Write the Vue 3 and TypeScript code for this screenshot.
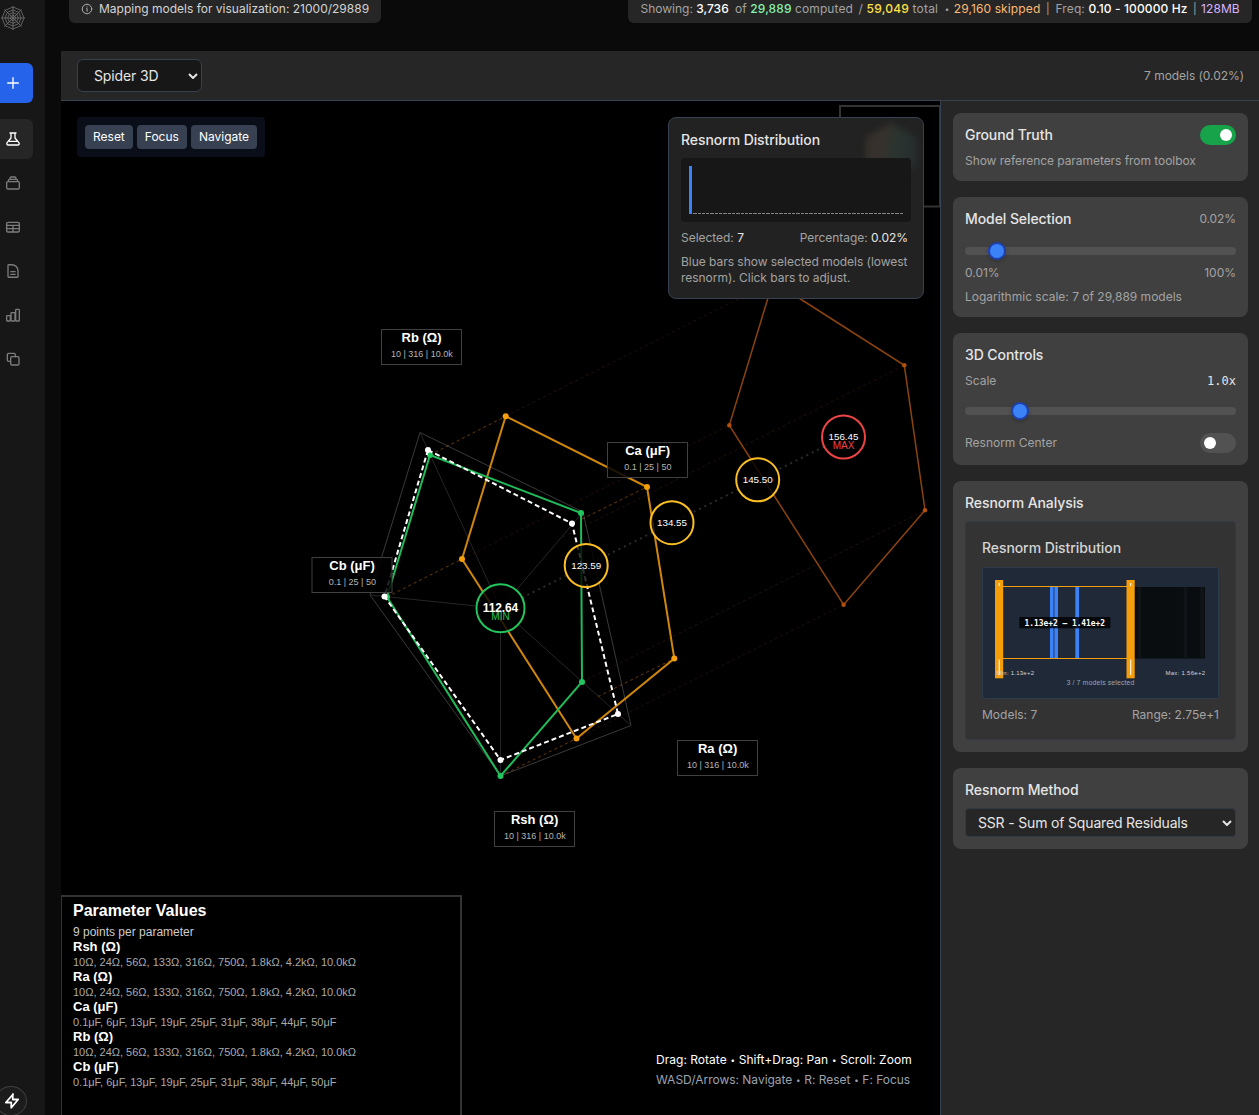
<script setup lang="ts">
import { ref } from 'vue'

type Point = [number, number]

interface AxisLabel { name: string; marks: string; x: number; y: number }
interface LevelMark { x: number; y: number; r: number; value: string; note: string; color: string }
interface ParameterRow { name: string; values: string; width: number }

const groundTruth = ref(true)
const resnormCenter = ref(false)

const center: Point = [500.5, 608.5]
const frame: Point[] = [[420, 432.5], [583, 512], [631, 725.5], [500.5, 776], [370, 595]]
const green: Point[] = [[430, 455], [581, 513], [582, 682], [500.5, 776], [387, 597]]
const truth: Point[] = [[428, 450], [572, 523.5], [618, 714], [500.5, 760], [384.5, 596.5]]
const orange: Point[] = [[505.7, 416.2], [647, 487], [674.3, 658.5], [576.5, 738.5], [462, 559]]
const brown: Point[] = [[773, 281.5], [904.3, 365.3], [925, 510.2], [843.6, 604.7], [729.3, 425.3]]
const nearLinks: Point[] = [[430, 455], [582, 519], [598, 696.5], [500.5, 776], [387, 597]]
const farLinks: Point[] = [[505.7, 416.2], [563, 537], [582, 682], [576.5, 738.5], [462, 559]]

const toPoints = (list: Point[]): string => list.map((p) => p.join(',')).join(' ')

const axisLabels: AxisLabel[] = [
  { name: 'Rb (Ω)', marks: '10 | 316 | 10.0k', x: 381.5, y: 329.5 },
  { name: 'Ca (μF)', marks: '0.1 | 25 | 50', x: 607.5, y: 442.5 },
  { name: 'Cb (μF)', marks: '0.1 | 25 | 50', x: 312, y: 557.5 },
  { name: 'Ra (Ω)', marks: '10 | 316 | 10.0k', x: 677.5, y: 740.5 },
  { name: 'Rsh (Ω)', marks: '10 | 316 | 10.0k', x: 494.5, y: 811.5 },
]

const levels: LevelMark[] = [
  { x: 843.5, y: 437, r: 21.5, value: '156.45', note: 'MAX', color: '#ef4444' },
  { x: 757.7, y: 479.8, r: 21.5, value: '145.50', note: '', color: '#fbbf24' },
  { x: 672, y: 522.7, r: 21.5, value: '134.55', note: '', color: '#fbbf24' },
  { x: 586.2, y: 565.5, r: 21.5, value: '123.59', note: '', color: '#fbbf24' },
  { x: 500.5, y: 608.3, r: 24, value: '112.64', note: 'MIN', color: '#22c55e' },
]

const ohms = '10Ω, 24Ω, 56Ω, 133Ω, 316Ω, 750Ω, 1.8kΩ, 4.2kΩ, 10.0kΩ'
const farads = '0.1μF, 6μF, 13μF, 19μF, 25μF, 31μF, 38μF, 44μF, 50μF'
const parameters: ParameterRow[] = [
  { name: 'Rsh (Ω)', values: ohms, width: 283 },
  { name: 'Ra (Ω)', values: ohms, width: 283 },
  { name: 'Ca (μF)', values: farads, width: 263.5 },
  { name: 'Rb (Ω)', values: ohms, width: 283 },
  { name: 'Cb (μF)', values: farads, width: 263.5 },
]

const webRing = (r: number): string =>
  Array.from({ length: 8 }, (_, i) => {
    const a = (i * Math.PI) / 4
    return `${(12 + r * Math.sin(a)).toFixed(2)},${(12 - r * Math.cos(a)).toFixed(2)}`
  }).join(' ')
</script>

<template>
  <div class="app">
    <aside class="sidebar">
      <svg class="logo" viewBox="0 0 24 24" fill="none" stroke="#737373" stroke-width="0.8">
        <polygon v-for="r in [11, 8, 5.3, 2.6]" :key="r" :points="webRing(r)" />
        <path d="M12 0v24M0 12h24M3.5 3.5l17 17M20.500 3.500l-17 17" />
      </svg>
      <button class="nav new">
        <svg viewBox="0 0 24 24"><path d="M12 4v16M4 12h16" /></svg>
      </button>
      <button class="nav active">
        <svg viewBox="0 0 24 24"><path d="M7.500 3h9M9 3v7.500L3.200 17.500C2 19.500 3 21 5 21h14c2 0 3-1.500 1.800-3.500L15 10.500V3M6.500 15.500h11" /></svg>
      </button>
      <button class="nav">
        <svg viewBox="0 0 24 24"><path d="M4.500 10h15a2 2 0 0 1 2 2v7a2 2 0 0 1-2 2h-15a2 2 0 0 1-2-2v-7a2 2 0 0 1 2-2ZM5 10V8.500a2 2 0 0 1 2-2h10a2 2 0 0 1 2 2V10M7.500 6.500V5a2 2 0 0 1 2-2h5a2 2 0 0 1 2 2v1.500" /></svg>
      </button>
      <button class="nav">
        <svg viewBox="0 0 24 24"><rect x="2.500" y="5" width="19" height="14.500" rx="2" /><path d="M2.500 9.500h19M2.500 14.500h19M12 9.500v10" /></svg>
      </button>
      <button class="nav">
        <svg viewBox="0 0 24 24"><path d="M19.500 14.250v-2.600a9 9 0 0 0-9-9H5.600c-.6 0-1.100.5-1.100 1.100v16.500c0 .6.500 1.100 1.100 1.100h12.800c.6 0 1.100-.5 1.100-1.100ZM8.800 13h6.400M8.800 17h6.400" /></svg>
      </button>
      <button class="nav">
        <svg viewBox="0 0 24 24"><rect x="2.500" y="13" width="5.500" height="8" rx="1" /><rect x="9" y="8.500" width="6" height="12.500" rx="1" /><rect x="16" y="3.500" width="5.500" height="17.500" rx="1" /></svg>
      </button>
      <button class="nav">
        <svg viewBox="0 0 24 24"><rect x="8.500" y="8.500" width="12.500" height="12.500" rx="2" /><path d="M15.500 8.500V5.500a2 2 0 0 0-2-2h-8a2 2 0 0 0-2 2v8a2 2 0 0 0 2 2h3" /></svg>
      </button>
      <div class="bolt">
        <svg viewBox="0 0 24 24"><path d="M13.500 3 3.800 14H11v7l9.200-11H13V3Z" /></svg>
      </div>
    </aside>

    <main class="main">
      <header class="statusbar">
        <div class="chip mapping">
          <svg viewBox="0 0 24 24"><circle cx="12" cy="12" r="9.500" /><path d="M11.300 11.300h.9v5.200M12 7.600v.4" /></svg>
          <span>Mapping models for visualization: 21000/29889</span>
        </div>
        <div class="chip stats">
          <span class="s0">Showing: <b>3,736</b></span>
          <span class="s1">of <b class="c-green">29,889</b> computed</span>
          <span class="s2">/ <b class="c-yellow">59,049</b> total</span>
          <span class="s3"><u>•</u><i class="c-orange">29,160 skipped</i></span>
          <span class="s4">|</span>
          <span class="s5">Freq: <b>0.10 - 100000 Hz</b></span>
          <span class="s6">|</span>
          <span class="c-purple">128MB</span>
        </div>
      </header>

      <section class="toolbar">
        <div class="select view-select">
          <span>Spider 3D</span>
          <svg viewBox="0 0 10 6"><path d="M1 1l4 4 4-4" /></svg>
        </div>
        <span class="count">7 models (0.02%)</span>
      </section>

      <div class="workspace">
        <section class="stage">
          <svg class="plot" viewBox="61 101 879 1014">
            <rect x="840" y="106" width="100" height="100.500" fill="none" stroke="#333" stroke-width="2" />

            <g stroke="#262626" fill="none">
              <polygon :points="toPoints(frame)" stroke="#3a3a3a" />
              <line v-for="(p, i) in frame" :key="i" :x1="center[0]" :y1="center[1]" :x2="p[0]" :y2="p[1]" />
            </g>

            <g fill="none" stroke-dasharray="3 3">
              <line v-for="(p, i) in farLinks" :key="'f' + i" :x1="p[0]" :y1="p[1]" :x2="brown[i][0]" :y2="brown[i][1]" stroke="#b4500d" stroke-opacity="0.2" />
              <line v-for="(p, i) in nearLinks" :key="'n' + i" :x1="p[0]" :y1="p[1]" :x2="orange[i][0]" :y2="orange[i][1]" stroke="#f58b0b" stroke-opacity="0.42" />
            </g>

            <polygon :points="toPoints(brown)" fill="none" stroke="#8a430d" stroke-width="1.500" />
            <circle v-for="(p, i) in brown" :key="'b' + i" :cx="p[0]" :cy="p[1]" r="2.200" fill="#b4500d" />
            <polygon :points="toPoints(orange)" fill="none" stroke="#cf860c" stroke-width="2" />
            <circle v-for="(p, i) in orange" :key="'o' + i" :cx="p[0]" :cy="p[1]" r="3" fill="#f59e0b" />
            <polygon :points="toPoints(green)" fill="none" stroke="#20bb59" stroke-width="2" />
            <circle v-for="(p, i) in green" :key="'g' + i" :cx="p[0]" :cy="p[1]" r="3" fill="#22c55e" />
            <polygon :points="toPoints(truth)" fill="none" stroke="#fff" stroke-width="2" stroke-dasharray="5 3" />
            <circle v-for="(p, i) in truth" :key="'t' + i" :cx="p[0]" :cy="p[1]" r="3" fill="#fff" />

            <line :x1="center[0]" :y1="center[1]" x2="843.500" y2="437" stroke="#2b2b2b" stroke-width="2" stroke-dasharray="2 4" />

            <g v-for="l in axisLabels" :key="l.name" :transform="`translate(${l.x} ${l.y})`" text-anchor="middle">
              <rect width="80" height="35" fill="#000" fill-opacity="0.85" stroke="#404040" />
              <text x="40.100" y="12.700" font-size="13" font-weight="700" fill="#fff">{{ l.name }}</text>
              <text x="40.300" y="27.500" font-size="9" fill="#b5b5b5">{{ l.marks }}</text>
            </g>

            <g v-for="m in levels" :key="m.value" text-anchor="middle">
              <circle :cx="m.x" :cy="m.y" :r="m.r" fill="#000" fill-opacity="0.8" :stroke="m.color" stroke-width="2" />
              <text v-if="m.r > 22" :x="m.x" :y="m.y + 3.500" font-size="12" font-weight="700" textLength="35.500" fill="#fff">{{ m.value }}</text>
              <text v-else :x="m.x" :y="m.y + 3" font-size="9.500" textLength="30" lengthAdjust="spacingAndGlyphs" fill="#fff">{{ m.value }}</text>
              <text v-if="m.note" :x="m.x" :y="m.y + 12" font-size="10" :fill="m.color">{{ m.note }}</text>
            </g>

            <rect x="61" y="896" width="400" height="230" fill="#000" stroke="#333" stroke-width="2" />
            <text x="73" y="916" font-size="16" font-weight="700" fill="#fff">Parameter Values</text>
            <text x="73" y="936" font-size="12" fill="#ccc">9 points per parameter</text>
            <g v-for="(p, i) in parameters" :key="p.name">
              <text x="73" :y="951.300 + i * 30" font-size="13" font-weight="700" fill="#fff">{{ p.name }}</text>
              <text x="73" :y="966 + i * 30" font-size="11" :textLength="p.width" fill="#aaa">{{ p.values }}</text>
            </g>
          </svg>

          <div class="camera">
            <button>Reset</button>
            <button>Focus</button>
            <button>Navigate</button>
          </div>

          <div class="popover">
            <div class="glow"><span></span></div>
            <h3>Resnorm Distribution</h3>
            <div class="bars"><i v-for="n in 50" :key="n" :class="{ on: n === 1 }"></i></div>
            <div class="split">
              <span>Selected: <em>7</em></span>
              <span>Percentage: <em>0.02%</em></span>
            </div>
            <p>Blue bars show selected models (lowest<br />resnorm). Click bars to adjust.</p>
          </div>

          <div class="hints">
            <div>Drag: Rotate <u>•</u> Shift+Drag: Pan <u>•</u> Scroll: Zoom</div>
            <div class="dim">WASD/Arrows: Navigate <u>•</u> R: Reset <u>•</u> F: Focus</div>
          </div>
        </section>

        <aside class="panel">
          <div class="card truth">
            <div class="row">
              <h3>Ground Truth</h3>
              <button class="switch" :class="{ on: groundTruth }" @click="groundTruth = !groundTruth"></button>
            </div>
            <p>Show reference parameters from toolbox</p>
          </div>

          <div class="card selection">
            <div class="row"><h3>Model Selection</h3><small>0.02%</small></div>
            <div class="slider"><span style="left: 23px"></span></div>
            <div class="row small"><span>0.01%</span><span>100%</span></div>
            <p>Logarithmic scale: 7 of 29,889 models</p>
          </div>

          <div class="card controls">
            <h3>3D Controls</h3>
            <div class="row small"><span>Scale</span><span class="mono">1.0x</span></div>
            <div class="slider"><span style="left: 46px"></span></div>
            <div class="row small center">
              <span>Resnorm Center</span>
              <button class="switch" :class="{ on: resnormCenter }" @click="resnormCenter = !resnormCenter"></button>
            </div>
          </div>

          <div class="card analysis">
            <h3>Resnorm Analysis</h3>
            <div class="inner">
              <h4>Resnorm Distribution</h4>
              <svg class="range" viewBox="982 567 237 132">
                <rect x="982.500" y="567.500" width="236" height="131" rx="2" fill="#1f2937" stroke="#2d3a4c" />
                <rect x="1050" y="587" width="3.500" height="71" fill="#3b82f6" />
                <rect x="1053.500" y="587" width="1.500" height="71" fill="#2f62b4" />
                <rect x="1055" y="587" width="3" height="71" fill="#3b82f6" />
                <rect x="1075.300" y="587" width="3.700" height="71" fill="#3b82f6" />
                <rect x="1134" y="587" width="71" height="71.500" fill="#090d10" />
                <path d="M1139.500 587v71.500M1185.500 587v71.500M1202 587v71.500" stroke="#101317" stroke-width="3.500" />
                <rect x="999" y="586.500" width="131.500" height="72" fill="none" stroke="#f59e0b" />
                <g v-for="x in [995, 1126.500]" :key="x">
                  <rect :x="x" y="580" width="8.200" height="98.300" fill="#f59e0b" />
                  <path :d="`M${x + 4.200} 583v3M${x + 4.200} 659.500v15.500`" stroke="#fff" />
                </g>
                <rect x="1019.300" y="617" width="91" height="11.300" fill="#000" fill-opacity="0.8" />
                <text class="mono" x="1064.800" y="625.500" text-anchor="middle" font-size="8" font-weight="700" textLength="80.500" lengthAdjust="spacingAndGlyphs" fill="#fff">1.13e+2 – 1.41e+2</text>
                <g font-size="6" fill="#d1d5db">
                  <text x="996.500" y="675" textLength="37.500">Min: 1.13e+2</text>
                  <text x="1165.500" y="675" textLength="39.500">Max: 1.56e+2</text>
                  <text x="1066.500" y="685" font-size="7" textLength="68" fill="#9ca3af">3 / 7 models selected</text>
                </g>
              </svg>
              <div class="row small"><span>Models: 7</span><span>Range: 2.75e+1</span></div>
            </div>
          </div>

          <div class="card method">
            <h3>Resnorm Method</h3>
            <div class="select">
              <span>SSR - Sum of Squared Residuals</span>
              <svg viewBox="0 0 10 6"><path d="M1 1l4 4 4-4" /></svg>
            </div>
          </div>
        </aside>
      </div>
    </main>
  </div>
</template>

<style>
body {
  margin: 0;
  background: #0a0a0a;
}
</style>

<style scoped>
* {
  box-sizing: border-box;
}
.app {
  display: flex;
  width: 1259px;
  height: 1115px;
  overflow: hidden;
  background: #0a0a0a;
  color: #e5e5e5;
  font-family: Inter, "Liberation Sans", sans-serif;
  font-size: 12px;
  line-height: 16px;
}
h3, h4, p {
  margin: 0;
}
h3, h4 {
  font-size: 14px;
  line-height: 20px;
  font-weight: 500;
  letter-spacing: -0.08px;
}
button {
  border: 0;
  padding: 0;
  font: inherit;
  color: inherit;
}
b, i, em {
  font-style: normal;
  font-weight: 500;
}
u {
  display: inline-block;
  width: 5.2px;
  font-size: 8px;
  line-height: 8px;
  text-align: center;
  vertical-align: 1px;
  text-decoration: none;
}

.sidebar {
  position: relative;
  width: 45px;
  flex: none;
  background: #171717;
}
.logo {
  display: block;
  width: 24px;
  height: 24px;
  margin: 6px 0 33px 1px;
}
.nav {
  display: block;
  width: 33px;
  height: 40px;
  margin-bottom: 4px;
  padding-left: 5px;
  border-radius: 0 6px 6px 0;
  background: transparent;
  color: #7c7c7c;
}
.nav svg {
  display: block;
  width: 16px;
  height: 16px;
}
.nav svg, .bolt svg, .mapping svg {
  fill: none;
  stroke: currentColor;
  stroke-width: 2;
  stroke-linecap: round;
  stroke-linejoin: round;
}
.nav.new {
  margin-bottom: 16px;
  background: #2563eb;
  color: #fff;
}
.nav.active {
  background: #262626;
  color: #fff;
}
.bolt {
  position: absolute;
  left: -5px;
  top: 1086px;
  width: 32px;
  height: 30px;
  border: 1px solid #404040;
  border-radius: 50%;
  background: #1c1c1c;
  color: #fff;
}
.bolt svg {
  width: 18px;
  height: 18px;
  margin: 5px 0 0 7px;
  stroke-width: 2.4;
}

.main {
  display: flex;
  flex-direction: column;
  flex: 1;
  padding-left: 16px;
  min-width: 0;
}
.statusbar {
  display: flex;
  justify-content: space-between;
  align-items: flex-start;
  height: 51px;
  padding: 0 8px;
}
.chip {
  display: flex;
  align-items: center;
  height: 23px;
  padding-bottom: 5px;
  border-radius: 0 0 6px 6px;
  background: #262626;
}
.mapping {
  width: 312px;
  padding-left: 12px;
  gap: 6px;
  color: #d4d4d4;
}
.mapping svg {
  width: 12px;
  height: 12px;
  color: #b0b0b0;
}
.stats {
  width: 624px;
  margin-right: -1px;
  padding-left: 12.5px;
  color: #a3a3a3;
  white-space: nowrap;
}
.stats span {
  flex: none;
}
.stats b {
  color: #fff;
}
.stats .c-green { color: #86efac; }
.stats .c-yellow { color: #fde047; }
.stats .c-orange { color: #fdba74; font-weight: 400; }
.stats .c-purple { color: #d8b4fe; letter-spacing: 0.1px; }
.s0 { width: 94.5px; }
.s1 { width: 123.5px; letter-spacing: 0.1px; }
.s2 { width: 86px; letter-spacing: 0.2px; }
.s3 { width: 101.5px; letter-spacing: 0.12px; }
.s3 u { margin-right: 4px; }
.s4 { width: 9.5px; font-size: 11px; }
.s5 { width: 137.5px; letter-spacing: 0.12px; }
.s6 { width: 8px; font-size: 11px; }

.toolbar {
  display: flex;
  justify-content: space-between;
  align-items: center;
  height: 50px;
  padding: 0 15px 0 16px;
  border-bottom: 1px solid #374151;
  background: #262626;
}
.count {
  color: #a3a3a3;
  letter-spacing: -0.05px;
}
.select {
  display: flex;
  justify-content: space-between;
  align-items: center;
  border: 1px solid #374151;
  border-radius: 4px;
  color: #e5e5e5;
  font-size: 14px;
  letter-spacing: -0.12px;
}
.select svg {
  width: 10px;
  height: 6px;
  fill: none;
  stroke: currentColor;
  stroke-width: 2;
}
.view-select {
  width: 125px;
  height: 33px;
  padding: 0 3px 0 16px;
  border-radius: 6px;
  background: #171717;
}

.workspace {
  display: flex;
  flex: 1;
}
.stage {
  position: relative;
  width: 879px;
  background: #000;
}
.plot {
  display: block;
  width: 879px;
  height: 1014px;
  font-family: "Liberation Sans", Arial, sans-serif;
}
.camera {
  position: absolute;
  left: 16px;
  top: 16px;
  display: flex;
  gap: 4px;
  padding: 8px;
  border-radius: 4px;
  background: #090e19;
}
.camera button {
  height: 24px;
  padding: 0 8px;
  border-radius: 4px;
  background: #374151;
  color: #fff;
}
.popover {
  position: absolute;
  left: 607px;
  top: 16px;
  width: 256px;
  height: 182px;
  padding: 12px;
  border: 1px solid #374151;
  border-radius: 8px;
  background: #222;
  color: #a3a3a3;
  overflow: hidden;
}
.popover > * {
  position: relative;
}
.popover h3 {
  color: #e5e5e5;
}
.popover p {
  letter-spacing: -0.03px;
}
.popover .glow {
  position: absolute;
  left: 197px;
  top: 5px;
  width: 50px;
  height: 56px;
  filter: blur(3px);
}
.glow span {
  display: block;
  height: 100%;
  background: linear-gradient(100deg, #36312c 38%, #2b3530 52%, #28302f 75%);
  clip-path: polygon(50% 0, 100% 25%, 100% 75%, 50% 100%, 0 75%, 0 25%);
}
.bars {
  display: flex;
  align-items: flex-end;
  gap: 1px;
  height: 64px;
  margin-top: 8px;
  padding: 8px;
  border-radius: 4px;
  background: #171717;
}
.bars i {
  flex: 1;
  height: 1px;
  background: #858585;
}
.bars i.on {
  height: 48px;
  background: #3b82f6;
}
.split {
  display: flex;
  justify-content: space-between;
  margin: 8px 3px 8px 0;
  letter-spacing: -0.03px;
}
.split em {
  color: #e5e5e5;
  font-weight: 400;
}
.hints {
  position: absolute;
  left: 595px;
  top: 951px;
  color: #fff;
  letter-spacing: 0.03px;
  white-space: nowrap;
}
.hints .dim {
  margin-top: 4px;
  color: #9ca3af;
  letter-spacing: -0.02px;
}

.panel {
  display: flex;
  flex-direction: column;
  gap: 16px;
  flex: 1;
  padding: 12px 11px 0 12px;
  border-left: 1px solid #374151;
  background: #262626;
}
.card {
  padding: 12px;
  border-radius: 8px;
  background: #404040;
  color: #a3a3a3;
}
.card h3 {
  color: #e5e5e5;
}
.row {
  display: flex;
  justify-content: space-between;
  align-items: center;
}
.row small {
  font-size: 12px;
  letter-spacing: -0.1px;
}
.truth {
  height: 68px;
}
.truth p {
  margin-top: 8px;
  letter-spacing: -0.05px;
}
.switch {
  width: 36px;
  height: 20px;
  padding: 4px;
  border-radius: 10px;
  background: #525252;
}
.switch::before {
  content: "";
  display: block;
  width: 12px;
  height: 12px;
  border-radius: 50%;
  background: #fff;
}
.switch.on {
  background: #16a34a;
}
.switch.on::before {
  margin-left: 16px;
}
.slider {
  position: relative;
  height: 8px;
  border-radius: 4px;
  background: #525252;
}
.slider span {
  position: absolute;
  top: -5px;
  width: 18px;
  height: 18px;
  border: 2px solid #1e40af;
  border-radius: 50%;
  background: #3b82f6;
  box-shadow: 0 2px 4px rgba(0, 0, 0, 0.2);
}
.selection {
  height: 120px;
}
.selection .slider {
  margin: 18px 0 10px;
}
.selection p {
  margin-top: 8px;
}
.controls {
  height: 132px;
}
.controls h3 {
  margin: 0 0 8px;
}
.controls .slider {
  margin: 18px 0;
}
.mono {
  font-family: "DejaVu Sans Mono", monospace;
}
.row .mono {
  color: #e5e5e5;
}
.analysis {
  height: 271px;
}
.inner {
  height: 219px;
  margin-top: 8px;
  padding: 16px;
  border: 1px solid #323843;
  border-radius: 4px;
  background: #333;
}
.inner h4 {
  color: #d4d4d4;
}
.range {
  display: block;
  width: 237px;
  height: 132px;
  margin: 9px 0 8px;
  font-family: "Liberation Sans", sans-serif;
}
.method {
  height: 81px;
}
.method .select {
  height: 29px;
  margin-top: 8px;
  padding: 0 3px 0 12px;
  background: #262626;
  border-color: #323a46;
  letter-spacing: -0.17px;
}
</style>
